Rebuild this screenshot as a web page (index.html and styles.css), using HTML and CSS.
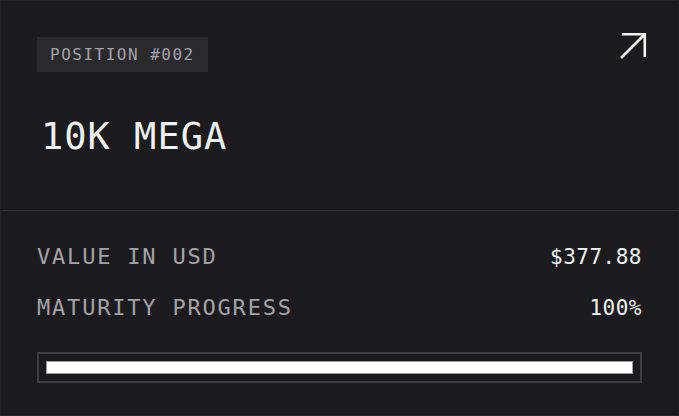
FILE: index.html
```html
<!DOCTYPE html>
<html>
<head>
<meta charset="utf-8">
<link rel="stylesheet" href="styles.css">
</head>
<body>
<div class="card">
  <div class="top">
    <div class="header">
      <span class="badge">POSITION #002</span>
      <svg class="arrow" width="28" height="28" viewBox="0 0 28 28">
        <path d="M2 26 L25 3 M3 2.2 H25.8 V25" fill="none" stroke="#f4f4f4" stroke-width="2.6"/>
      </svg>
    </div>
    <h1 class="title">10K MEGA</h1>
  </div>
  <div class="bottom">
    <div class="row">
      <span class="label">VALUE IN USD</span>
      <span class="value">$377.88</span>
    </div>
    <div class="row row2">
      <span class="label">MATURITY PROGRESS</span>
      <span class="value">100%</span>
    </div>
    <div class="bar">
      <div class="fill" style="width:100%"></div>
    </div>
  </div>
</div>
</body>
</html>
```
FILE: styles.css
```css
html, body {
  margin: 0;
  padding: 0;
  background: #1b1b1d;
}
.card {
  box-sizing: border-box;
  width: 679px;
  height: 416px;
  border: 1px solid #242427;
  background: #1b1b1d;
  font-family: "DejaVu Sans Mono", "Liberation Mono", monospace;
  font-feature-settings: "zero" 1;
}
.top {
  box-sizing: border-box;
  height: 210px;
  padding: 36px 36px 0 36px;
  border-bottom: 1px solid #323235;
}
.header {
  display: flex;
  justify-content: space-between;
  align-items: flex-start;
}
.badge {
  display: inline-block;
  height: 35px;
  line-height: 35px;
  padding: 0 13px 0 13px;
  background: #2a2a2d;
  color: #a2a2a4;
  font-size: 16px;
  letter-spacing: 1.5px;
}
.arrow {
  margin-top: -5px;
  margin-right: -5px;
  display: block;
}
.title {
  margin: 46px 0 0 4px;
  font-weight: normal;
  font-size: 37px;
  line-height: 37px;
  letter-spacing: 1px;
  color: #f2f2f2;
}
.bottom {
  padding: 35px 36px 0 36px;
}
.row {
  display: flex;
  justify-content: space-between;
  align-items: baseline;
  font-size: 22px;
  line-height: 22px;
}
.row2 {
  margin-top: 29px;
}
.label {
  color: #a3a3a5;
  letter-spacing: 1.8px;
}
.value {
  color: #f4f4f4;
  font-size: 21px;
  letter-spacing: 0.5px;
  margin-right: 0;
}
.bar {
  box-sizing: border-box;
  margin-top: 33px;
  height: 31px;
  border: 2px solid #3e3e41;
  padding: 7px;
}
.fill {
  height: 13px;
  background: #ffffff;
  box-shadow: 0 0 0 1px #9a9a9a inset;
}
```
